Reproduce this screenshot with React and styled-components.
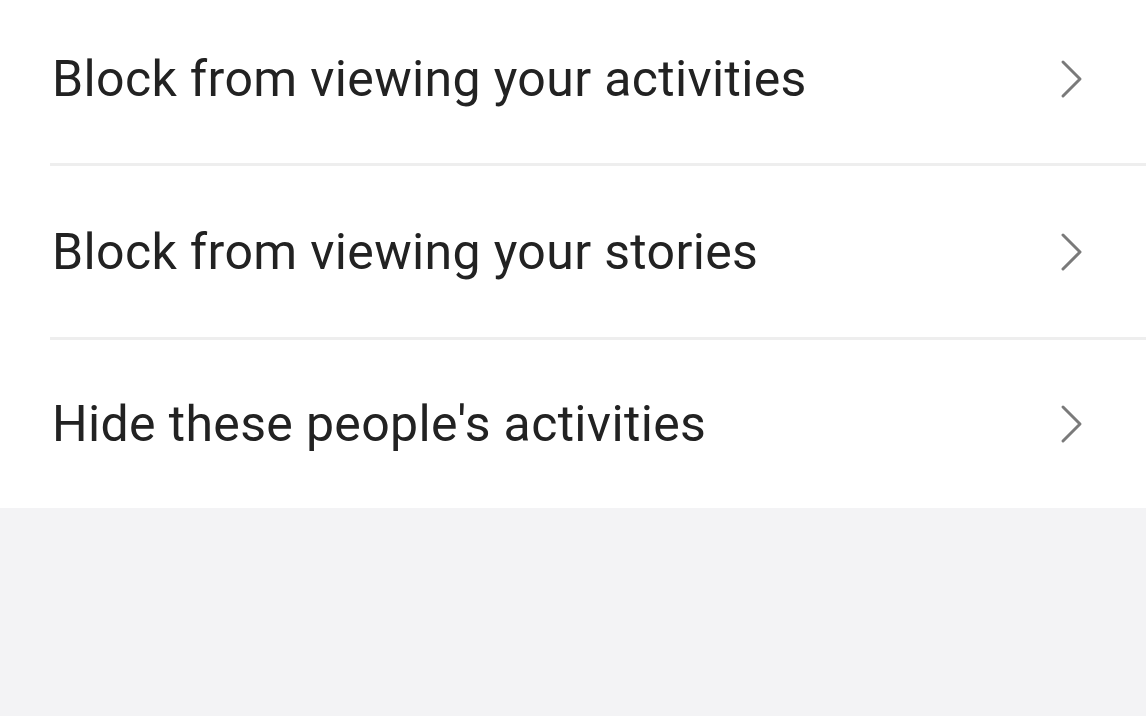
import React from "react";
import styled, { createGlobalStyle } from "styled-components";

const Global = createGlobalStyle`
  html, body { margin: 0; padding: 0; background: #f3f3f5; }
  body { font-family: Roboto, "Noto Sans", "Liberation Sans", sans-serif; overflow: hidden; }
`;

const Page = styled.div`
  width: 1146px;
  height: 716px;
  background: #f3f3f5;
  overflow: hidden;
`;

const List = styled.div`
  background: #ffffff;
  margin-top: -6px;
  display: flex;
  flex-direction: column;
`;

const Label = styled.span`
  font-size: 50px;
  color: #222222;
  letter-spacing: 0.35px;
`;

const Divider = styled.div`
  height: 3px;
  margin-left: 50px;
  background: #eeeeee;
`;

const Item = styled.div`
  height: ${(p) => p.$h}px;
  display: flex;
  align-items: center;
  justify-content: space-between;
  padding: 0 62px 0 52px;
`;

const Chevron = () => (
  <svg width="24" height="40" viewBox="0 0 24 40" fill="none">
    <path d="M3 3 L20 20 L3 37" stroke="#7a7a7a" strokeWidth="3" strokeLinecap="round" strokeLinejoin="round" />
  </svg>
);

const items = [
  { text: "Block from viewing your activities", h: 169 },
  { text: "Block from viewing your stories", h: 171 },
  { text: "Hide these people's activities", h: 168 },
];

export default function App() {
  return (
    <Page>
      <Global />
      <List>
        {items.map((it, i) => (
          <React.Fragment key={it.text}>
            <Item $h={it.h}>
              <Label>{it.text}</Label>
              <Chevron />
            </Item>
            {i < items.length - 1 && <Divider />}
          </React.Fragment>
        ))}
      </List>
    </Page>
  );
}
